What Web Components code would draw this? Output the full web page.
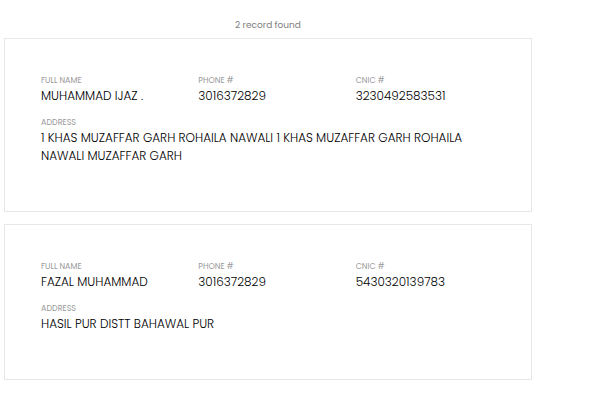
<!DOCTYPE html>
<html lang="en">
<head>
<meta charset="utf-8">
<title>Records</title>
<style>
body { margin: 0; background: #fff; font-family: Poppins, Inter, "Open Sans", sans-serif; color: #000; }
</style>
</head>
<body>
<record-list>
  <span slot="status">2 record found</span>
  <record-card>
    <record-field label="Full name">MUHAMMAD IJAZ .</record-field>
    <record-field label="Phone #">3016372829</record-field>
    <record-field label="CNIC #">3230492583531</record-field>
    <record-field label="Address" wide>1 KHAS MUZAFFAR GARH ROHAILA NAWALI 1 KHAS MUZAFFAR GARH ROHAILA NAWALI MUZAFFAR GARH</record-field>
  </record-card>
  <record-card>
    <record-field label="Full name">FAZAL MUHAMMAD</record-field>
    <record-field label="Phone #">3016372829</record-field>
    <record-field label="CNIC #">5430320139783</record-field>
    <record-field label="Address" wide>HASIL PUR DISTT BAHAWAL PUR</record-field>
  </record-card>
</record-list>
<script>
class RecordList extends HTMLElement {
  constructor() {
    super();
    this.attachShadow({ mode: "open" }).innerHTML = `
      <style>
        :host { display: flex; flex-direction: column; gap: 12px; padding: 18px 68px 0 4px; }
        header { text-align: center; font-size: 9px; line-height: 15px; color: #808080; margin-bottom: -7px; }
      </style>
      <header><slot name="status"></slot></header>
      <slot></slot>`;
  }
}
class RecordCard extends HTMLElement {
  constructor() {
    super();
    this.attachShadow({ mode: "open" }).innerHTML = `
      <style>
        :host { display: grid; grid-template-columns: repeat(3, 1fr); row-gap: 12px;
          border: 1px solid #e8e8e8; padding: 36px 18px 46px 36px; }
      </style>
      <slot></slot>`;
  }
}
class RecordField extends HTMLElement {
  constructor() {
    super();
    this.attachShadow({ mode: "open" }).innerHTML = `
      <style>
        :host { display: block; }
        :host([wide]) { grid-column: 1 / -1; padding-right: 18px; }
        .label { font-size: 8px; line-height: 12px; color: #999; text-transform: uppercase; }
        .value { font-size: 12px; line-height: 18px; font-weight: 300; }
      </style>
      <div class="label"></div>
      <div class="value"><slot></slot></div>`;
    this.shadowRoot.querySelector(".label").textContent = this.getAttribute("label");
  }
}
customElements.define("record-field", RecordField);
customElements.define("record-card", RecordCard);
customElements.define("record-list", RecordList);
</script>
</body>
</html>
